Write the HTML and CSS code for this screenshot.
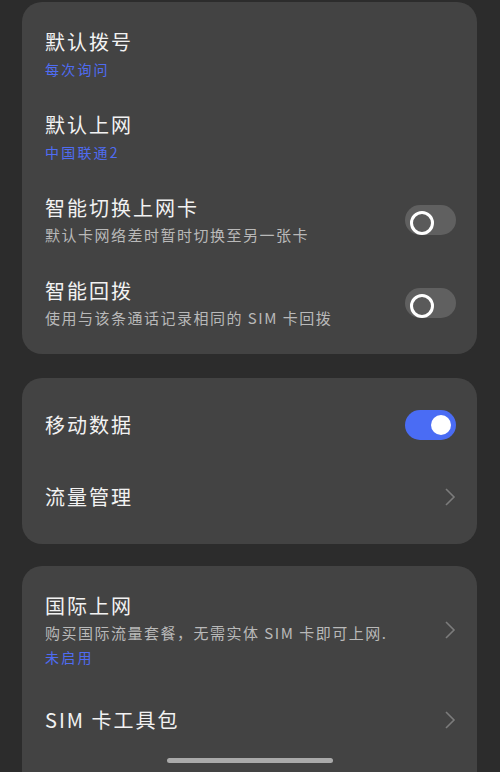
FILE: index.html
```html
<!DOCTYPE html>
<html lang="zh-CN">
<head>
    <meta charset="UTF-8">
    <meta name="viewport" content="width=device-width, initial-scale=1.0">
    <title>双卡与移动网络</title>
    <link rel="stylesheet" href="styles.css">
</head>
<body>
    <div class="page">
        <!-- 默认卡设置 -->
        <div class="card">
            <div class="row">
                <div class="row-text">
                    <div class="row-title">默认拨号</div>
                    <div class="row-sub blue">每次询问</div>
                </div>
            </div>
            <div class="row">
                <div class="row-text">
                    <div class="row-title">默认上网</div>
                    <div class="row-sub blue">中国联通2</div>
                </div>
            </div>
            <div class="row">
                <div class="row-text">
                    <div class="row-title">智能切换上网卡</div>
                    <div class="row-sub">默认卡网络差时暂时切换至另一张卡</div>
                </div>
                <span class="switch"></span>
            </div>
            <div class="row">
                <div class="row-text">
                    <div class="row-title">智能回拨</div>
                    <div class="row-sub">使用与该条通话记录相同的 SIM 卡回拨</div>
                </div>
                <span class="switch"></span>
            </div>
        </div>

        <!-- 移动数据 -->
        <div class="card card-mid">
            <div class="row row-single">
                <div class="row-title">移动数据</div>
                <span class="switch on"></span>
            </div>
            <div class="row row-single">
                <div class="row-title">流量管理</div>
                <svg class="arrow" width="12" height="20" viewBox="0 0 12 20"><path d="M2 2 L10 10 L2 18" fill="none" stroke="#7c7c7c" stroke-width="1.6"/></svg>
            </div>
        </div>

        <!-- 国际上网 -->
        <div class="card card-last">
            <div class="row row-tall">
                <div class="row-text">
                    <div class="row-title">国际上网</div>
                    <div class="row-sub">购买国际流量套餐，无需实体 SIM 卡即可上网.</div>
                    <div class="row-sub blue">未启用</div>
                </div>
                <svg class="arrow" width="12" height="20" viewBox="0 0 12 20"><path d="M2 2 L10 10 L2 18" fill="none" stroke="#7c7c7c" stroke-width="1.6"/></svg>
            </div>
            <div class="row row-single">
                <div class="row-title">SIM 卡工具包</div>
                <svg class="arrow" width="12" height="20" viewBox="0 0 12 20"><path d="M2 2 L10 10 L2 18" fill="none" stroke="#7c7c7c" stroke-width="1.6"/></svg>
            </div>
        </div>
    </div>

    <div class="home-bar"></div>
</body>
</html>
```

FILE: styles.css
```css
* {
    padding: 0px;
    margin: 0px;
    box-sizing: border-box;
}

html,
body {
    height: 100%;
    overflow: hidden;
}

body {
    background: #2c2c2c;
    font-family: "Noto Sans CJK SC", "Noto Sans", sans-serif;
    color: #f0f0f0;
}

.page {
    padding: 2px 23px 0 22px;
    display: flex;
    flex-direction: column;
    gap: 24px;
}

.card {
    background: #434343;
    border-radius: 20px;
    padding: 10px 21px 10px 23px;
}

.card-mid {
    padding-top: 11px;
    padding-bottom: 11px;
}

.card-last {
    margin-top: -2px;
    padding-bottom: 40px;
}

.row {
    height: 83px;
    display: flex;
    align-items: center;
    justify-content: space-between;
}

.row-single {
    height: 72px;
}

.row-tall {
    height: 108px;
}

.row-title {
    font-size: 20px;
    line-height: 28px;
    letter-spacing: 2px;
    color: #f2f2f2;
}

.row-sub {
    margin-top: 2px;
    font-size: 15px;
    line-height: 22px;
    letter-spacing: 1.5px;
    color: #b9b9b9;
}

.row-sub.blue {
    font-size: 14px;
    color: #4f6cf2;
    letter-spacing: 2.2px;
}

.switch {
    flex: none;
    width: 51px;
    height: 30px;
    border-radius: 15px;
    background: #606060;
    position: relative;
}

.switch::after {
    content: "";
    position: absolute;
    left: 5px;
    top: 6px;
    width: 18px;
    height: 18px;
    border-radius: 50%;
    border: 3.5px solid #ffffff;
    background: #5a5a5a;
}

.switch.on {
    background: #4a6cf4;
}

.switch.on::after {
    left: 26px;
    top: 5px;
    width: 20px;
    height: 20px;
    border: none;
    background: #ffffff;
}

.arrow {
    flex: none;
    margin-right: 0px;
}

.home-bar {
    position: fixed;
    left: 167px;
    bottom: 9px;
    width: 166px;
    height: 5px;
    border-radius: 3px;
    background: #aaaaaa;
}
```
